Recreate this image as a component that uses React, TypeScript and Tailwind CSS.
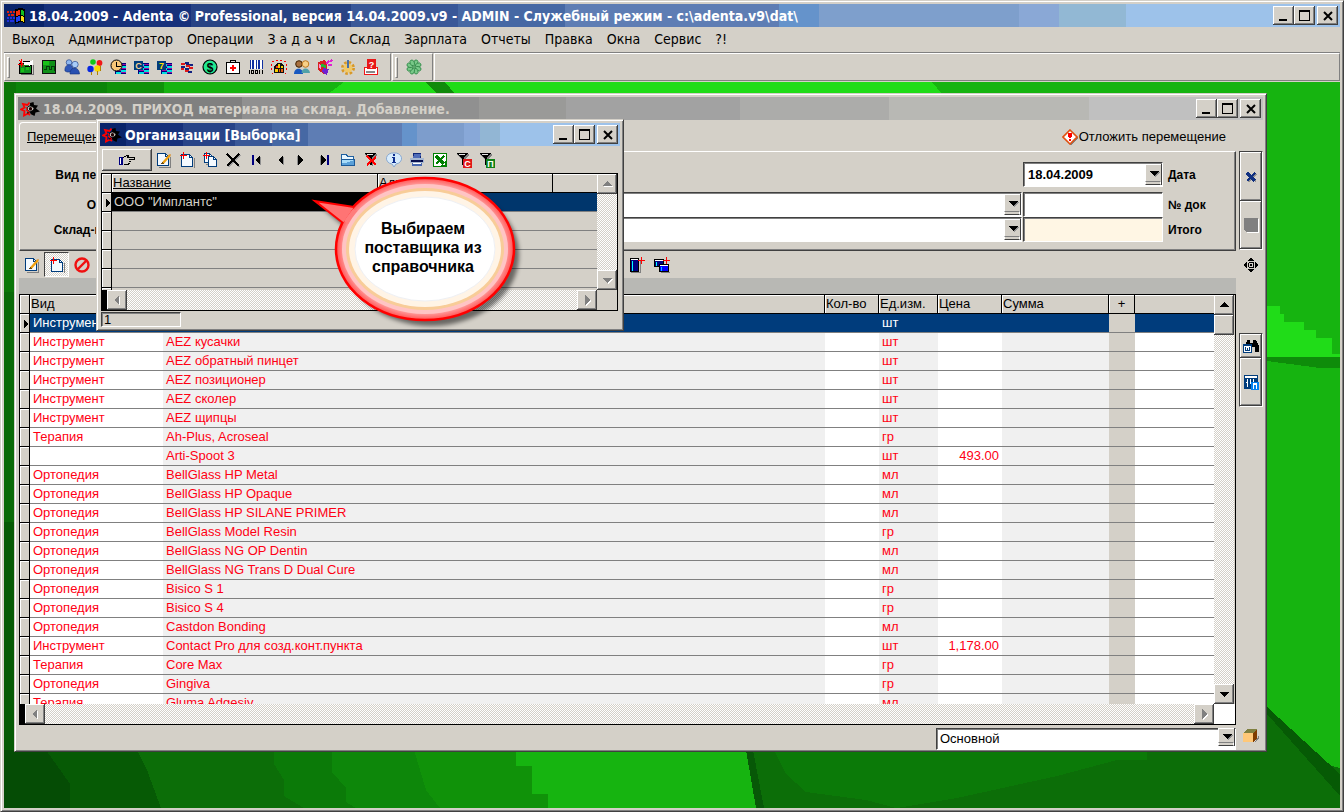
import React from 'react';
import clsx from 'clsx';

const raised = 'bg-[#d4d0c8] shadow-[inset_-1px_-1px_0_#404040,inset_1px_1px_0_#fff,inset_-2px_-2px_0_#808080]';
const sunken = 'border border-t-[#404040] border-l-[#404040] border-r-white border-b-white shadow-[inset_1px_1px_0_#808080]';
const windowFrame =
  'border border-t-[#d4d0c8] border-l-[#d4d0c8] border-r-[#404040] border-b-[#404040] shadow-[inset_1px_1px_0_#fff,inset_-1px_-1px_0_#808080] bg-[#d4d0c8] p-[3px]';
const dither = 'bg-[repeating-conic-gradient(#ffffff_0_25%,#d4d0c8_0_50%)] bg-[length:2px_2px]';

const menuItems = [
  'Выход', 'Администратор', 'Операции', 'З а д а ч и', 'Склад', 'Зарплата',
  'Отчеты', 'Правка', 'Окна', 'Сервис', '?!',
];

type Row = { kind: string; name: string; unit: string; price?: string };

const rows: Row[] = [
  { kind: 'Инструмент', name: '', unit: 'шт' },
  { kind: 'Инструмент', name: 'AEZ кусачки', unit: 'шт' },
  { kind: 'Инструмент', name: 'AEZ обратный пинцет', unit: 'шт' },
  { kind: 'Инструмент', name: 'AEZ позиционер', unit: 'шт' },
  { kind: 'Инструмент', name: 'AEZ сколер', unit: 'шт' },
  { kind: 'Инструмент', name: 'AEZ щипцы', unit: 'шт' },
  { kind: 'Терапия', name: 'Ah-Plus, Acroseal', unit: 'гр' },
  { kind: '', name: 'Arti-Spoot 3', unit: 'шт', price: '493.00' },
  { kind: 'Ортопедия', name: 'BellGlass HP Metal', unit: 'мл' },
  { kind: 'Ортопедия', name: 'BellGlass HP Opaque', unit: 'мл' },
  { kind: 'Ортопедия', name: 'BellGlass HP SILANE PRIMER', unit: 'мл' },
  { kind: 'Ортопедия', name: 'BellGlass Model Resin', unit: 'гр' },
  { kind: 'Ортопедия', name: 'BellGlass NG OP Dentin', unit: 'мл' },
  { kind: 'Ортопедия', name: 'BellGlass NG Trans D Dual Cure', unit: 'мл' },
  { kind: 'Ортопедия', name: 'Bisico S 1', unit: 'гр' },
  { kind: 'Ортопедия', name: 'Bisico S 4', unit: 'гр' },
  { kind: 'Ортопедия', name: 'Castdon Bonding', unit: 'мл' },
  { kind: 'Инструмент', name: 'Contact Pro для созд.конт.пункта', unit: 'шт', price: '1,178.00' },
  { kind: 'Терапия', name: 'Core Max', unit: 'гр' },
  { kind: 'Ортопедия', name: 'Gingiva', unit: 'гр' },
  { kind: 'Терапия', name: 'Gluma Adgesiv', unit: 'мл' },
];

/* ---------- icons ---------- */

const Icon = ({ children, className = '' }: { children: React.ReactNode; className?: string }) => (
  <svg viewBox="0 0 16 16" className={clsx('size-4 shrink-0', className)} shapeRendering="crispEdges" aria-hidden="true">
    {children}
  </svg>
);

const PageShape = ({ x = 0, y = 0, w = 12, h = 13 }) => (
  <>
    <path d={`M${x + 2} ${y + h + 1}H${x + w + 1}V${y + 4}`} fill="none" stroke="#808080" />
    <path d={`M${x + 0.5} ${y + 0.5}h${w - 4}l3 3v${h - 4}h-${w - 1}z`} fill="#f4faff" stroke="#003c7c" />
    <path d={`M${x + w - 3.5} ${y + 0.5}v3h3`} fill="none" stroke="#003c7c" />
  </>
);

const EditIcon = () => (
  <Icon>
    <PageShape x={1} y={1} />
    <path d="M7 11L14 3" stroke="#f0a010" strokeWidth="2.4" shapeRendering="auto" />
    <path d="M5 12l1-2 2 1.5z" fill="#6b4a10" />
    <path d="M13.3 2l2 1.6" stroke="#d8a868" strokeWidth="1.5" />
  </Icon>
);

const NewIcon = () => (
  <Icon>
    <PageShape x={2} y={2} />
    <path d="M4.5 0v7M1 3.500h7" stroke="#f00" fill="none" />
  </Icon>
);

const CopyIcon = () => (
  <Icon>
    <PageShape x={2} y={1} w={9} h={10} />
    <PageShape x={6} y={4} w={9} h={11} />
    <path d="M4.500 0v7M1 3.500h7" stroke="#f00" fill="none" />
  </Icon>
);

const CrossIcon = () => (
  <Icon>
    <path d="M3 3l11 12M15 3L4 15" stroke="#a0a0a0" strokeWidth="1.500" />
    <path d="M2 2l12 12M14 2L2 14" stroke="#000" strokeWidth="1.800" />
  </Icon>
);

const NavIcon = ({ dir, bar }: { dir: 'left' | 'right'; bar?: boolean }) => (
  <Icon>
    <g transform={dir === 'right' ? 'matrix(-1 0 0 1 16 0)' : undefined}>
      {bar && <path d="M4 3h2v10h-2z" fill="#000080" />}
      <path d="M13 4v9l-5-4z" fill="#909090" />
      <path d="M12 3v10l-5-5z" fill="#000" />
    </g>
  </Icon>
);

const FolderIcon = () => (
  <Icon>
    <path d="M1.500 13.500v-11h5l1 2h6v3" fill="#e8f6ff" stroke="#2060a0" />
    <path d="M1 7h14v7H1z" fill="#5aa0d8" />
    <path d="M2 8h12L5 11H2z" fill="#a8dcf8" />
    <path d="M1.500 7.500h13v6h-13z" fill="none" stroke="#1c5a98" />
  </Icon>
);

const FunnelShape = () => (
  <>
    <path d="M2 2h12v1l-4 5v6l-3-2V8z" fill="#808080" />
    <path d="M1 1h12L9 6v7H7V6z" fill="#000" />
    <path d="M4 2h6" stroke="#e8e8e8" />
  </>
);

const FunnelOffIcon = () => (
  <Icon>
    <FunnelShape />
    <path d="M4 4l9 9M13 5l-9 8" stroke="#f00" strokeWidth="2" />
  </Icon>
);

const FunnelLetterIcon = ({ letter, color }: { letter: string; color: string }) => (
  <Icon className="overflow-visible">
    <FunnelShape />
    <rect x="8" y="7" width="9" height="9" fill={color} />
    <text x="12.500" y="14.500" fontSize="9" fontWeight="bold" textAnchor="middle" fill="#fff" fontFamily="Liberation Sans, sans-serif">
      {letter}
    </text>
  </Icon>
);

const InfoIcon = () => (
  <Icon>
    <g shapeRendering="auto">
      <path d="M8 1a6.500 5.500 0 0 1 2 11l-2 3-2-3A6.500 5.500 0 0 1 8 1z" fill="#d8ecfc" stroke="#88a8d0" />
    </g>
    <path d="M7 2h2v2H7zM6 5h3v5h1v1H6v-1h1V6H6z" fill="#103090" />
  </Icon>
);

const PrinterIcon = () => (
  <Icon>
    <path d="M4 1h8v5H4z" fill="#102878" />
    <path d="M5 2h7l-1 4H4z" fill="#506cb8" />
    <path d="M1 6h14v5H1z" fill="#a8b8d0" />
    <path d="M2 8h12v2H2z" fill="#081050" />
    <path d="M3 11h10v3H3z" fill="#4868b0" />
    <path d="M4 11h8v1H4z" fill="#fff" />
  </Icon>
);

const ExcelIcon = () => (
  <Icon>
    <rect x="1" y="1" width="14" height="14" fill="#008000" />
    <rect x="2" y="2" width="12" height="12" fill="#fff" />
    <path d="M4 4l8 8" stroke="#008000" strokeWidth="3" />
    <path d="M12 4l-8 8" stroke="#008000" strokeWidth="1.500" />
    <path d="M9 14h5V9h-1v4H9z" fill="#008000" />
  </Icon>
);

const HandIcon = () => (
  <Icon>
    <path d="M0 5h4v8H0z" fill="#000080" />
    <path d="M1 6h1v6H1z" fill="#fff" />
    <path d="M4.500 5.500l3-2h2l-1 2h6.500v2h-5M10 9.500h2M9 11.500h2M4.500 12.500h5" fill="none" stroke="#000" />
  </Icon>
);

const ForbidIcon = () => (
  <Icon>
    <g shapeRendering="auto">
      <circle cx="8" cy="8" r="6.500" fill="none" stroke="#f01010" strokeWidth="2.400" />
      <path d="M4 12l8-8" stroke="#f01010" strokeWidth="2.400" />
    </g>
  </Icon>
);

const TileAddIcon = ({ double }: { double?: boolean }) => (
  <Icon>
    {double ? (
      <>
        <rect x=".5" y="2.500" width="9" height="7" fill="#000080" stroke="#000" />
        <path d="M1 3.500h8" stroke="#fff" />
        <path d="M2.500 5v4" stroke="#00ffff" />
        <path d="M7 15.500h9V8" stroke="#808080" fill="none" />
        <rect x="5.500" y="7.500" width="9" height="7" fill="#0000ff" stroke="#000" />
        <path d="M6 8.500h8" stroke="#fff" />
        <path d="M7.500 10v4" stroke="#00c8ff" />
      </>
    ) : (
      <>
        <path d="M2 15.500h9V3" stroke="#808080" fill="none" />
        <rect x="1.500" y="1.500" width="8" height="13" fill="#000080" stroke="#000" />
        <path d="M2 2.500h7" stroke="#fff" />
        <path d="M3.500 4v10" stroke="#00ffff" />
      </>
    )}
    <path d="M12.500 0v7M9 3.500h7" stroke="#f00" />
  </Icon>
);

const StarIcon = () => (
  <svg viewBox="0 0 20 16" className="h-4 w-5 shrink-0" aria-hidden="true">
    <path d="M10 2l3.500-1 .5 3 4 .5-2 3 4 3-4.500 1-1 3.500-4-2z" fill="#000" />
    <path d="M9.500 1.500L7.500 4 3 3l1.500 3.500L1 8.500l3.500 1.500L4 14.500l4-2 2 1.500" fill="none" stroke="#f00" strokeWidth="1.800" />
    <path d="M10 4a4 4 0 0 1 4 4l-2 3-5 1" fill="none" stroke="#000" strokeWidth="1.200" />
    <path d="M7 8c1-4 5-4 7-.5C12.500 11 8.500 11 7 8z" fill="#d4d0c8" stroke="#000" />
    <circle cx="10.500" cy="7.800" r="1.700" fill="#200000" />
    <path d="M6 6l2 5M6 9l4 3" stroke="#f00" />
  </svg>
);

const FlagIcon = () => (
  <svg viewBox="0 0 20 16" className="h-4 w-5 shrink-0" shapeRendering="crispEdges" aria-hidden="true">
    <path d="M9 1l5-1 5 1v14l-5-1-5 2z" fill="#000" />
    <path d="M10 3l4-1v5l-4 1z" fill="#f03010" />
    <path d="M15 2l3 1v5l-3-1z" fill="#10c020" />
    <path d="M10 9l4-1v5l-4 1z" fill="#2040f0" />
    <path d="M15 8l3 1v5l-3-1z" fill="#f8e010" />
    <path d="M1 3h2v2H1zM4 3h2v2H4zM7 3h2v2H7zM2 6h2v2H2zM5 6h3v2H5z" fill="#e02010" />
    <path d="M1 9h2v2H1zM4 9h2v2H4zM7 9h2v2H7zM1 12h2v2H1zM4 12h4v2H4z" fill="#2030e0" />
  </svg>
);

const Stripes = () => (
  <>
    <rect x="5" y="4" width="11" height="11" fill="#000080" />
    <path d="M6 5.500h5M11 7.500h5M6 9.500h5M11 11.500h5M6 13.500h5" stroke="#00e0e0" strokeWidth="2" />
    <path d="M11 5.500h5M6 7.500h5M11 9.500h5M6 11.500h5M11 13.500h5" stroke="#a010a0" strokeWidth="1" />
  </>
);

const toolbarIcons: { label: string; icon: React.ReactNode }[] = [
  {
    label: 'Свойства',
    icon: (
      <Icon>
        <path d="M3 15.500h12.500V6" fill="none" stroke="#707070" />
        <rect x="1.500" y="4.500" width="12" height="10" fill="#109020" stroke="#000" />
        <path d="M3 9h3v4H3zM8 8h3v3H8z" fill="#18c018" />
        <path d="M6 2h6l3-1v5l-4 1-1-1H6z" fill="#fff" />
        <path d="M5 3l3-1h4M7 7l3 1 4-2" stroke="#000" fill="none" />
        <path d="M1 1l5 6M3.500 0v8M0 5.500h5" stroke="#f00" />
      </Icon>
    ),
  },
  {
    label: 'Доска',
    icon: (
      <Icon>
        <rect x="1" y="1" width="14" height="14" fill="#101010" />
        <rect x="2" y="2" width="12" height="12" fill="#109018" />
        <rect x="2" y="2" width="6" height="4" fill="#18c018" />
        <path d="M3 10.500h2v-3h3v3h2v-3h3v4" fill="none" stroke="#043c08" />
      </Icon>
    ),
  },
  {
    label: 'Люди',
    icon: (
      <Icon>
        <g shapeRendering="auto" stroke="#10307c" strokeWidth=".6">
          <circle cx="5" cy="3.500" r="2.800" fill="#90b8f0" />
          <path d="M1 12c-1-7 7-9 8-2v3H3z" fill="#3058b8" />
          <circle cx="11" cy="5.500" r="3.200" fill="#a8ccf8" />
          <path d="M6 15c0-8 9-8 9.500 0z" fill="#2850b0" />
        </g>
      </Icon>
    ),
  },
  {
    label: 'Шары',
    icon: (
      <Icon>
        <g shapeRendering="auto">
          <circle cx="6" cy="3" r="2.800" fill="#10c818" />
          <circle cx="12.500" cy="4" r="2.900" fill="#f01818" />
          <circle cx="3.500" cy="10" r="3.200" fill="#0828e0" />
          <circle cx="10.500" cy="9.500" r="3.200" fill="#f8d800" />
        </g>
        <path d="M4.500 13v3M10.500 12v4M13.500 7v5" stroke="#b08000" />
      </Icon>
    ),
  },
  {
    label: 'Расписание',
    icon: (
      <Icon>
        <Stripes />
        <circle cx="6.500" cy="6.500" r="5.500" fill="#f8c878" stroke="#000" shapeRendering="auto" />
        <path d="M6.500 3v4h4" fill="none" stroke="#000" />
      </Icon>
    ),
  },
  {
    label: 'Календарь С',
    icon: (
      <Icon>
        <Stripes />
        <rect x="1" y="2" width="9" height="9" fill="#003c7c" />
        <text x="5.500" y="9.500" fontSize="9" fontWeight="bold" fill="#f8d090" textAnchor="middle" fontFamily="Liberation Sans, sans-serif">C</text>
      </Icon>
    ),
  },
  {
    label: 'Календарь 7',
    icon: (
      <Icon>
        <Stripes />
        <rect x="1" y="2" width="9" height="9" fill="#003c7c" />
        <text x="5.500" y="9.500" fontSize="9" fontWeight="bold" fill="#ffe000" textAnchor="middle" fontFamily="Liberation Sans, sans-serif">7</text>
      </Icon>
    ),
  },
  {
    label: 'Потоки',
    icon: (
      <Icon>
        <path d="M2 4h4v2H2zM7 6h4v2H7z" fill="#e01818" />
        <path d="M6 3h4v2h4v2h-3V6H7V5H6z" fill="#102080" />
        <path d="M2 7h4v2h4v2H6V9H2z" fill="#102080" />
        <path d="M2 9h3v2H2zM10 8h4v2h-4zM6 11h4v2H6z" fill="#e01818" />
        <path d="M9 12h4v2H9z" fill="#102080" />
      </Icon>
    ),
  },
  {
    label: 'Касса',
    icon: (
      <Icon>
        <g shapeRendering="auto">
          <circle cx="8" cy="8" r="7" fill="#20e890" stroke="#000" strokeWidth="1.200" />
          <text x="8" y="12.500" fontSize="12" fontWeight="bold" textAnchor="middle" fontFamily="Liberation Sans, sans-serif">$</text>
        </g>
      </Icon>
    ),
  },
  {
    label: 'Аптечка',
    icon: (
      <Icon>
        <path d="M5.500 3V1.500h5V3" fill="none" stroke="#000" strokeWidth="1.500" />
        <rect x="1.500" y="3.500" width="13" height="11" fill="#fff" stroke="#000" />
        <path d="M8 6v6M5 9h6" stroke="#f00" strokeWidth="2" />
      </Icon>
    ),
  },
  {
    label: 'Штрихкод',
    icon: (
      <Icon>
        <rect x="2" y="1" width="13" height="9" fill="#fff" />
        <path d="M2.500 1v9M5 1v9M8.500 1v9M11 1v9M14.500 1v9" stroke="#1030a0" strokeWidth="1.400" />
        <path d="M1.500 11v4M3.500 11.500h2v3h-2zM7.500 11.500h2v3h-2zM11.500 11v4M14.500 11v4" fill="none" stroke="#000" />
      </Icon>
    ),
  },
  {
    label: 'Окно',
    icon: (
      <Icon>
        <path d="M1 2.500h2M5 1.500h2M9 1.500h2M13 2.500h2M.500 5v2M15.500 5v2M.500 9v2M15.500 9v2M1 14h1M14 14h1" stroke="#f00" />
        <path d="M3 14V7l3-3h4l3 3v7z" fill="#101010" />
        <path d="M5 7h2v2H5z" fill="#f03010" />
        <path d="M7 5h2v4H7zM10 7h2v2h-2zM4 10h3v3H4z" fill="#f8d000" />
        <path d="M8 10h1v3H8zM10 10h2v3h-2z" fill="#f06010" />
      </Icon>
    ),
  },
  {
    label: 'Сотрудники',
    icon: (
      <Icon>
        <g shapeRendering="auto">
          <circle cx="5" cy="5" r="3.300" fill="#a87040" stroke="#402000" />
          <path d="M0 15c0-7 9-7 9 0z" fill="#1858c0" />
          <circle cx="11.500" cy="5" r="3.300" fill="#f8d088" stroke="#c07820" />
          <path d="M7.500 14c0-6 8-6 8.500 0z" fill="#50a0a8" />
        </g>
      </Icon>
    ),
  },
  {
    label: 'Материалы',
    icon: (
      <Icon>
        <path d="M1 3l6-2 3 2v11l-3 1-6-4z" fill="#d82020" />
        <path d="M4 5l5 1v3L4 8z" fill="#20b838" />
        <path d="M6 9l6 1-2 6-5-3z" fill="#7020d0" />
        <path d="M9 5l3-3M11 6h4M13 3l2-2" stroke="#e020d0" strokeWidth="1.800" />
        <path d="M2 5l2 1v4L2 9z" fill="#f890d0" />
      </Icon>
    ),
  },
  {
    label: 'Настройки',
    icon: (
      <Icon>
        <g shapeRendering="auto">
          <circle cx="8" cy="9" r="5.500" fill="none" stroke="#d89828" strokeWidth="3" strokeDasharray="2.500 1.800" />
          <circle cx="8" cy="9" r="4.500" fill="#f0c868" />
        </g>
        <rect x="7" y="1" width="2" height="8" fill="#4870a8" />
      </Icon>
    ),
  },
  {
    label: 'Справка',
    icon: (
      <Icon>
        <path d="M1.500 8.500h13v7h-13z" fill="#fff" stroke="#f01818" />
        <path d="M3 12.500h9" stroke="#888" strokeWidth="2" />
        <rect x="4" y="0" width="9" height="10" fill="#e81818" />
        <text x="8.500" y="8.500" fontSize="9" fontWeight="bold" fill="#fff" textAnchor="middle" fontFamily="Liberation Sans, sans-serif">?</text>
      </Icon>
    ),
  },
];

const FlowerIcon = () => (
  <svg viewBox="0 0 16 16" className="size-4" aria-hidden="true">
    {[22, 67, 112, 157, 202, 247, 292, 337].map((a) => (
      <ellipse key={a} cx="8" cy="3.500" rx="2.100" ry="3" fill="#78c888" stroke="#308848" strokeWidth=".8" transform={`rotate(${a} 8 8)`} />
    ))}
    <circle cx="8" cy="8" r="1.200" fill="#58a868" />
  </svg>
);

/* ---------- window parts ---------- */

const WindowButton = ({ label, children, className = '' }: { label: string; children: React.ReactNode; className?: string }) => (
  <button aria-label={label} className={clsx('flex h-[19px] w-[21px] items-center justify-center', raised, className)}>
    <svg viewBox="0 0 14 14" className="size-[14px]" shapeRendering="crispEdges" aria-hidden="true">
      {children}
    </svg>
  </button>
);

const TitleBar = ({ title, icon, className }: { title: string; icon: React.ReactNode; className: string }) => (
  <header className={clsx('flex h-[23px] shrink-0 items-center px-[2px]', className)}>
    {icon}
    <h1 className="min-w-0 flex-1 truncate pl-[3px] font-[DejaVu_Sans_Condensed,sans-serif] text-[14px] leading-5 font-bold">{title}</h1>
    <WindowButton label="Свернуть">
      <path d="M2 10h8v2H2z" />
    </WindowButton>
    <WindowButton label="Развернуть">
      <path d="M1.500 2h10v9.500h-10z" fill="none" stroke="#000" />
      <path d="M1 1h11v2H1z" />
    </WindowButton>
    <WindowButton label="Закрыть" className="ml-[2px]">
      <path d="M3 3l8 8M11 3l-8 8" stroke="#000" strokeWidth="2" shapeRendering="auto" />
    </WindowButton>
  </header>
);

const arrows = {
  up: 'M3 10h10l-5-5z',
  down: 'M3 6h10l-5 5z',
  left: 'M10 3v10l-5-5z',
  right: 'M6 3v10l5-5z',
};

const ScrollButton = ({ dir, disabled }: { dir: keyof typeof arrows; disabled?: boolean }) => (
  <button aria-label={`Прокрутка ${dir}`} disabled={disabled} className={clsx('flex size-5 shrink-0 items-center justify-center', raised)}>
    <Icon>
      {disabled && <path d={arrows[dir]} fill="#fff" transform="translate(1 1)" />}
      <path d={arrows[dir]} fill={disabled ? '#808080' : '#000'} />
    </Icon>
  </button>
);

const DropArrow = () => (
  <span className="pointer-events-none absolute top-[2px] right-px bottom-[2px] flex w-[17px] flex-col border-r border-[#404040] bg-[#d4d0c8]">
    <span className="flex flex-1 items-center justify-center border-t border-l border-white">
      <svg viewBox="0 0 12 8" className="h-2 w-3" shapeRendering="crispEdges" aria-hidden="true">
        <path d="M2 3h10l-5 5z" fill="#909090" />
        <path d="M1 2h10l-5 5z" />
      </svg>
    </span>
    <span className="h-1 border border-white border-t-[#808080] border-b-[#404040]" />
  </span>
);

const Combo = ({ id, label, value, className }: { id: string; label?: string; value: string; className: string }) => (
  <div className={clsx('relative', className)}>
    <select id={id} aria-label={label} className={clsx('h-full w-full appearance-none bg-white px-[3px] text-[13px] outline-none', sunken)}>
      <option>{value}</option>
    </select>
    <DropArrow />
  </div>
);

const IconButton = ({ label, children }: { label: string; children: React.ReactNode }) => (
  <button aria-label={label} className="flex h-6 w-[23px] shrink-0 items-center justify-center">
    {children}
  </button>
);

const RowMarker = ({ active }: { active?: boolean }) => (
  <td className="h-[19px] border-r border-b border-black bg-[#d4d0c8] p-0 shadow-[inset_1px_1px_0_#fff]">
    {active && (
      <svg viewBox="0 0 9 14" className="h-[14px] w-[9px]" shapeRendering="crispEdges" aria-label="Текущая строка">
        <path d="M4 3v9l4-4z" />
      </svg>
    )}
  </td>
);

/* ---------- desktop ---------- */

const Wallpaper = () => (
  <svg viewBox="0 0 1336 726" preserveAspectRatio="none" className="absolute inset-0 h-full w-full" shapeRendering="crispEdges" aria-hidden="true">
    <rect width="1336" height="726" fill="#16b410" />
    <path d="M0 0h160v12H0z" fill="#10920a" />
    <path d="M0 0h103v12H0z" fill="#0c840a" />
    <path d="M340 0h588l10 12H324z" fill="#20dc18" />
    <path d="M421 0h20l10 12h-18z" fill="#108a0a" />
    <path d="M0 0h12v726H0z" fill="#0c7608" />
    <path d="M0 210h12v516H0z" fill="#0a6a08" />
    <path d="M0 440h12v286H0z" fill="#065a05" />
    <path d="M1263 224h13v8h4v8h20v8h12v8h16v16h8v3h-73z" fill="#20dc18" />
    <path d="M1263 275h73v11h-20l-53-7z" fill="#0e8c0a" />
    <path d="M0 668h742l13 58H0z" fill="#16b410" />
    <path d="M0 668h512v16h16v28h16v14H0z" fill="#109209" />
    <path d="M0 668h410l12 40 14 18H0z" fill="#0d870a" />
    <path d="M0 668h328v22l14 16v14l10 6H0z" fill="#0b7a08" />
    <path d="M0 668h270v14l10 16v16l20 12H0z" fill="#0c6e08" />
    <path d="M0 668h133l10 20 14 38H0z" fill="#065a05" />
    <path d="M0 668h42l10 14 14 20v24H0z" fill="#054c05" />
    <path d="M742 668h521l73 58H752z" fill="#0b7a08" />
    <path d="M742 668h28l12 24 20 18 60 8 30 8H752z" fill="#0c6e08" />
    <path d="M742 668h7l11 58h-8z" fill="#075807" />
    <path d="M1263 668h-120v10h-30l-60 16-100 22-60 10h443v-40z" fill="#0c6e08" />
    <path d="M1263 625l73 67v22l-73-82z" fill="#065a05" />
    <path d="M1263 632l73 82v12h-73z" fill="#0c6e08" />
  </svg>
);

const headCell = 'h-[19px] border-r border-b border-black bg-[#d4d0c8] py-0 font-normal leading-[18px] shadow-[inset_1px_1px_0_#fff]';
const headText = 'pl-px pr-0 text-left';
const bodyCell = 'h-[19px] border-b border-[#808080] py-0 leading-[18px] whitespace-nowrap overflow-hidden';

const MaterialsGrid = () => (
  <div className="flex min-h-0 flex-1 flex-col border border-l-0 border-black">
    <div className="flex min-h-0 flex-1">
      <div className="min-w-0 flex-1 overflow-hidden bg-white">
        <table className="w-full table-fixed border-separate border-spacing-0 border-l border-black text-[13px]">
          <colgroup>
            <col className="w-[10px]" />
            <col className="w-[133px]" />
            <col />
            <col className="w-[54px]" />
            <col className="w-[59px]" />
            <col className="w-[64px]" />
            <col className="w-[107px]" />
            <col className="w-[26px]" />
            <col className="w-[79px]" />
          </colgroup>
          <thead>
            <tr>
              <th className={headCell} />
              <th className={clsx(headCell, headText)}>Вид</th>
              <th className={clsx(headCell, headText)}>Название</th>
              <th className={clsx(headCell, headText)}>Кол-во</th>
              <th className={clsx(headCell, headText)}>Ед.изм.</th>
              <th className={clsx(headCell, headText)}>Цена</th>
              <th className={clsx(headCell, headText)}>Сумма</th>
              <th className={clsx(headCell, 'text-center')}>+</th>
              <th className="h-[19px] border-b border-black bg-[#d4d0c8] shadow-[inset_0_1px_0_#fff]" />
            </tr>
          </thead>
          <tbody>
            {rows.map((row, i) => {
              const active = i === 0;
              const white = active ? 'bg-[#003c7c] text-white' : 'bg-white text-[#ff0014]';
              const gray = active ? 'bg-[#003c7c] text-white' : 'bg-[#f0f0f0] text-[#ff0014]';
              return (
                <tr key={i}>
                  <RowMarker active={active} />
                  <td className={clsx(bodyCell, white, 'pl-[3px]')}>{row.kind}</td>
                  <td className={clsx(bodyCell, gray, 'pl-[3px]')}>{row.name}</td>
                  <td className={clsx(bodyCell, white)} />
                  <td className={clsx(bodyCell, gray, 'pl-[3px]')}>{row.unit}</td>
                  <td className={clsx(bodyCell, white, 'pr-[3px] text-right')}>{row.price}</td>
                  <td className={clsx(bodyCell, gray)} />
                  <td className={clsx(bodyCell, 'bg-[#d4d0c8]')} />
                  <td className={clsx(bodyCell, white)} />
                </tr>
              );
            })}
          </tbody>
        </table>
      </div>
      <div className={clsx('flex w-[21px] flex-col border-r border-[#d4d0c8]', dither)}>
        <ScrollButton dir="up" />
        <div className={clsx('size-5', raised)} />
        <div className="flex-1" />
        <ScrollButton dir="down" />
      </div>
    </div>
    <div className="flex h-5 shrink-0">
      <div className="w-[6px] bg-black" />
      <div className={clsx('flex flex-1 justify-between', dither)}>
        <ScrollButton dir="left" disabled />
        <ScrollButton dir="right" disabled />
      </div>
      <div className="w-[21px] bg-white" />
    </div>
  </div>
);

const fieldLabel = 'text-[12px] font-bold';

const MovementForm = () => (
  <div className="flex h-[100px] shrink-0 flex-col border border-t-white border-r-[#404040] border-b-[#404040] border-l-white pt-[10px] shadow-[inset_-1px_-1px_0_#808080]">
    <div className="mb-[5px] flex items-center">
      <label htmlFor="kind" className={clsx(fieldLabel, 'w-[144px] text-right')}>Вид перемещения</label>
      <Combo id="kind" value="" className="ml-[6px] h-[25px] w-[300px]" />
      <div className="relative ml-auto h-[25px] w-[140px]">
        <input id="date" defaultValue="18.04.2009" className={clsx('h-full w-full bg-white pl-1 text-[13px] font-bold outline-none', sunken)} />
        <DropArrow />
      </div>
      <label htmlFor="date" className={clsx(fieldLabel, 'w-[72px] pl-[5px]')}>Дата</label>
    </div>
    <div className="flex items-center">
      <label htmlFor="org" className={clsx(fieldLabel, 'w-[144px] text-right')}>Организация</label>
      <Combo id="org" value="" className="ml-[6px] h-[25px] flex-1" />
      <input id="doc" className={clsx('ml-px h-[25px] w-[140px] bg-white outline-none', sunken)} />
      <label htmlFor="doc" className={clsx(fieldLabel, 'w-[72px] pl-[5px]')}>№ док</label>
    </div>
    <div className="flex items-center">
      <label htmlFor="store" className={clsx(fieldLabel, 'w-[144px] text-right')}>Склад-получатель</label>
      <Combo id="store" value="" className="ml-[6px] h-[25px] flex-1" />
      <input id="total" className={clsx('ml-px h-[25px] w-[140px] bg-[#fff6e4] outline-none', sunken)} />
      <label htmlFor="total" className={clsx(fieldLabel, 'w-[72px] pl-[5px]')}>Итого</label>
    </div>
  </div>
);

const sideGroup = 'flex flex-col border border-t-[#404040] border-l-[#404040] border-r-white border-b-white';
const sideButton = 'flex items-center justify-center';

const SideBar = () => (
  <aside className="flex w-6 flex-col items-center">
    <div className={clsx(sideGroup, 'mt-[31px] w-6')}>
      <button aria-label="Отменить" className={clsx(sideButton, raised, 'h-[49px]')}>
        <Icon>
          <path d="M5 5l8 7M13 5l-8 8" stroke="#909090" strokeWidth="2" />
          <path d="M4 4l8 8" stroke="#103080" strokeWidth="3" />
          <path d="M12 4l-8 8" stroke="#103080" strokeWidth="2" />
        </Icon>
      </button>
      <button aria-label="Стоп" disabled className={clsx(sideButton, raised, 'h-[48px]')}>
        <Icon>
          <path d="M2 2h14v14H4z" fill="#fff" />
          <path d="M1 1h14v14H3l-2-2z" fill="#808080" />
        </Icon>
      </button>
    </div>
    <button aria-label="Переместить" className="mt-[7px] size-4">
      <Icon>
        <path d="M8 0l3 4H5zM8 16l3-4H5zM0 8l4-3v6zM16 8l-4-3v6zM6 5h5v1H6zM6 10h5v1H6zM5 6h1v4H5zM10 6h1v4h-1zM7 7h2v2H7z" />
      </Icon>
    </button>
    <div className={clsx(sideGroup, 'mt-[60px] w-6')}>
      <button aria-label="Найти" className={clsx(sideButton, raised, 'h-6')}>
        <Icon>
          <path d="M4 2h3v3h3V2h3l3 6v6h-4V9H8v2H3V6z" fill="#000" />
          <rect x="0" y="6" width="9" height="9" fill="#003c7c" />
          <rect x="1" y="8" width="7" height="6" fill="#fff" />
          <path d="M2.500 9v3h2v-2 2h2V9" fill="none" stroke="#003c7c" />
        </Icon>
      </button>
      <button aria-label="Отчет" className={clsx(sideButton, raised, 'h-[48px]')}>
        <Icon>
          <path d="M1 1h14v14H1z" fill="#003c7c" />
          <path d="M2 2h12v2H2z" fill="#fff" />
          <path d="M4.500 5v8M7.500 5v5M10.500 5v4M3 8h2M8 8h4" stroke="#fff" />
          <path d="M8 8h8v8H8z" fill="#0080f0" />
          <path d="M10.500 15v-5h3v5" fill="none" stroke="#fff" strokeWidth="1.500" />
        </Icon>
      </button>
    </div>
    <button aria-label="Склад" className="mt-auto mb-1 size-4">
      <Icon>
        <path d="M12 14l4-4v-3z" fill="#808080" />
        <path d="M0 5l4-4h10l-3 4z" fill="#808040" />
        <path d="M0 5h10v9H0z" fill="#ffc878" />
        <path d="M10 5l4-4v9l-4 4z" fill="#803c00" />
      </Icon>
    </button>
  </aside>
);

const MovementWindow = () => (
  <section className={clsx('absolute top-[11px] right-[73px] bottom-[56px] left-[10px] flex flex-col', windowFrame)}>
    <TitleBar
      title="18.04.2009. ПРИХОД материала на склад. Добавление."
      icon={<StarIcon />}
      className="bg-[linear-gradient(90deg,#808080_18%,#909090_18%_37%,#9a9a98_37%_44%,#a2a2a2_44%_58%,#acacaa_58%_70%,#b8b8b4_70%_86%,#c0c0c0_86%)] text-[#d4d0c8]"
    />
    <div className="flex min-h-0 flex-1 gap-[3px] pl-px">
      <div className="flex min-w-0 flex-1 flex-col">
        <div className="mt-[2px] flex h-[29px] shrink-0 items-center justify-between pr-[10px]">
          <button className="h-full rounded-t border-t border-l border-white px-[7px] text-[13px] underline">Перемещение</button>
          <button className="flex items-center gap-px text-[13px]">
            <Icon>
              <path d="M9 2l7 7-7 7-3-2z" fill="#808080" />
              <path d="M8 1l7 7-7 7-7-7z" fill="#fff" stroke="#e05010" strokeWidth="1.600" shapeRendering="auto" />
              <path d="M6 4h4v4H9v1H7V8H6zM7 10h2v2H7z" fill="#f00" />
            </Icon>
            Отложить перемещение
          </button>
        </div>
        <MovementForm />
        <div className="flex h-[27px] shrink-0 items-center gap-px pl-px">
          <IconButton label="Изменить"><EditIcon /></IconButton>
          <button aria-label="Добавить" className={clsx('flex h-[25px] w-[25px] items-center justify-center border border-t-[#404040] border-l-[#404040] border-r-white border-b-white', dither)}>
            <NewIcon />
          </button>
          <IconButton label="Запретить"><ForbidIcon /></IconButton>
          <div className="ml-[531px] flex gap-[2px]">
            <IconButton label="Добавить запись"><TileAddIcon /></IconButton>
            <IconButton label="Добавить группу"><TileAddIcon double /></IconButton>
          </div>
        </div>
        <div className="h-4 shrink-0 bg-[#b8b8b4]" />
        <MaterialsGrid />
        <div className="flex h-[23px] shrink-0 justify-end">
          <Combo id="storage" label="Склад" value="Основной" className="mt-px h-[22px] w-[300px]" />
        </div>
      </div>
      <SideBar />
    </div>
  </section>
);

const dialogTools: [string, React.ReactNode][] = [
  ['Изменить', <EditIcon />],
  ['Добавить', <NewIcon />],
  ['Копировать', <CopyIcon />],
  ['Удалить', <CrossIcon />],
  ['Первая', <NavIcon dir="left" bar />],
  ['Назад', <NavIcon dir="left" />],
  ['Вперед', <NavIcon dir="right" />],
  ['Последняя', <NavIcon dir="right" bar />],
  ['Открыть', <FolderIcon />],
  ['Снять фильтр', <FunnelOffIcon />],
  ['Информация', <InfoIcon />],
  ['Печать', <PrinterIcon />],
  ['Excel', <ExcelIcon />],
  ['Фильтр С', <FunnelLetterIcon letter="C" color="#e01818" />],
  ['Фильтр П', <FunnelLetterIcon letter="П" color="#108018" />],
];

const Balloon = () => (
  <div className="absolute top-[49px] left-[215px] h-[156px] w-[212px]">
    <svg viewBox="0 0 212 156" className="absolute inset-0 h-full w-full overflow-visible" aria-hidden="true">
      <defs>
        <filter id="soft" x="-10%" y="-10%" width="125%" height="125%">
          <feGaussianBlur stdDeviation="2" />
        </filter>
        <radialGradient id="ring">
          <stop offset=".86" stopColor="#ffc4c4" />
          <stop offset=".93" stopColor="#ff8c8c" />
          <stop offset="1" stopColor="#ff5454" />
        </radialGradient>
      </defs>
      <g transform="translate(6 6)" filter="url(#soft)" opacity=".5">
        <path d="M3 32L41 41 30 55z" />
        <ellipse cx="113" cy="80" rx="88" ry="71" />
      </g>
      <ellipse cx="113" cy="80" rx="89" ry="71" fill="url(#ring)" stroke="#f00" strokeWidth="2.500" />
      <path d="M42 38L3 32l28 22" fill="#ff7474" stroke="#f00" strokeWidth="2" />
      <path d="M41 40l-9 12 5 4 11-12z" fill="#ff7c7c" />
      <ellipse cx="113" cy="80" rx="83" ry="65" fill="#ffc4c4" />
      <ellipse cx="113" cy="80" rx="79" ry="61" fill="#f8cc98" />
      <ellipse cx="113" cy="80" rx="76" ry="58" fill="#fff4e6" />
      <ellipse cx="113" cy="80" rx="70" ry="52" fill="#fff" stroke="#eef0f4" />
    </svg>
    <p className="relative ml-[43px] w-[136px] pt-[50px] text-center text-[16px] leading-[19px] font-bold">
      Выбираем поставщика из справочника
    </p>
  </div>
);

const OrganizationsDialog = () => (
  <section className={clsx('absolute top-[37px] left-[92px] flex w-[528px] flex-col', windowFrame)}>
    <TitleBar
      title="Организации [Выборка]"
      icon={<StarIcon />}
      className="bg-[linear-gradient(90deg,#0a246a_5%,#17317b_5%_16%,#284488_16%_26%,#3a5898_26%_33%,#4668a4_33%_40%,#5e7db4_40%_58%,#6593cb_58%_61%,#7d9dcc_61%_70%,#88a8d8_70%_73%,#92b6d4_73%_77%,#9dc2ea_77%)] text-white"
    />
    <div className="flex h-[27px] items-center pl-[2px]">
      <button aria-label="Выбрать" className={clsx('flex h-[22px] w-[50px] items-center justify-center', raised)}>
        <HandIcon />
      </button>
      {dialogTools.map(([label, icon]) => (
        <IconButton key={label} label={label}>{icon}</IconButton>
      ))}
    </div>
    <div className="mr-[2px] ml-px flex h-[138px] flex-col border border-black">
      <div className="flex min-h-0 flex-1">
        <div className="min-w-0 flex-1 overflow-hidden">
          <table className="w-full table-fixed border-separate border-spacing-0 text-[13px]">
            <colgroup>
              <col className="w-[10px]" />
              <col className="w-[266px]" />
              <col className="w-[175px]" />
              <col />
            </colgroup>
            <thead>
              <tr>
                <th className={headCell} />
                <th className={clsx(headCell, headText, 'underline')}>Название</th>
                <th className={clsx(headCell, headText, 'underline')}>Адрес</th>
                <th className="h-[19px] border-b border-black bg-[#d4d0c8] shadow-[inset_0_1px_0_#fff]" />
              </tr>
            </thead>
            <tbody>
              <tr>
                <RowMarker active />
                <td className={clsx(bodyCell, 'bg-black pl-[2px] text-[#d4d0c8]')}>ООО "Имплантс"</td>
                <td className={clsx(bodyCell, 'bg-[#00366c]')} />
                <td className={clsx(bodyCell, 'bg-[#00366c]')} />
              </tr>
              {[1, 2, 3, 4, 5].map((n) => (
                <tr key={n}>
                  <RowMarker />
                  <td className={bodyCell} />
                  <td className={bodyCell} />
                  <td className={bodyCell} />
                </tr>
              ))}
            </tbody>
          </table>
        </div>
        <div className={clsx('flex w-5 flex-col justify-between', dither)}>
          <ScrollButton dir="up" disabled />
          <ScrollButton dir="down" disabled />
        </div>
      </div>
      <div className="flex h-5 shrink-0">
        <div className="w-[5px] bg-black" />
        <div className={clsx('flex flex-1 justify-between', dither)}>
          <ScrollButton dir="left" disabled />
          <ScrollButton dir="right" disabled />
        </div>
        <div className="w-5" />
      </div>
    </div>
    <div className={clsx('mt-px ml-px h-[15px] w-20 pl-[2px] text-[13px] leading-[14px]', sunken)}>1</div>
    <Balloon />
  </section>
);

const toolbarGroup = 'flex items-center border border-t-white border-l-white border-r-[#808080] border-b-[#808080] pl-[2px]';
const Grip = () => <span className="h-[21px] w-[3px] border border-t-white border-l-white border-r-[#808080] border-b-[#808080]" />;

export default function App() {
  return (
    <div className={clsx('flex h-screen flex-col font-[Liberation_Sans,Arial,sans-serif] text-black', windowFrame)}>
      <TitleBar
        title="18.04.2009 - Adenta © Professional, версия 14.04.2009.v9 - ADMIN - Служебный режим - c:\adenta.v9\dat\"
        icon={<FlagIcon />}
        className="bg-[linear-gradient(90deg,#0a246a_3%,#17317b_3%_14%,#284384_14%_26%,#3a5898_26%_34%,#4668a4_34%_42%,#5e7db4_42%_58%,#6593cb_58%_61%,#7e9fcc_61%_76%,#8aa8d6_76%_79%,#92b8d4_79%_84%,#9dc2ea_84%)] text-white"
      />
      <nav className="flex h-[25px] shrink-0 items-center gap-[14px] px-2 font-[DejaVu_Sans_Condensed,sans-serif] text-[14px]">
        {menuItems.map((item) => (
          <button key={item}>{item}</button>
        ))}
      </nav>
      <div className="flex h-[30px] shrink-0 gap-px border-t border-[#808080] pb-px">
        <div className={clsx(toolbarGroup, 'w-[387px]')}>
          <Grip />
          <div className="flex pl-1">
            {toolbarIcons.map(({ label, icon }) => (
              <IconButton key={label} label={label}>{icon}</IconButton>
            ))}
          </div>
        </div>
        <div className={clsx(toolbarGroup, 'w-[41px] gap-2')}>
          <Grip />
          <button aria-label="Цветок"><FlowerIcon /></button>
        </div>
        <div className={clsx(toolbarGroup, 'flex-1')} />
      </div>
      <main className="relative min-h-0 flex-1 overflow-hidden">
        <Wallpaper />
        <MovementWindow />
        <OrganizationsDialog />
      </main>
    </div>
  );
}
